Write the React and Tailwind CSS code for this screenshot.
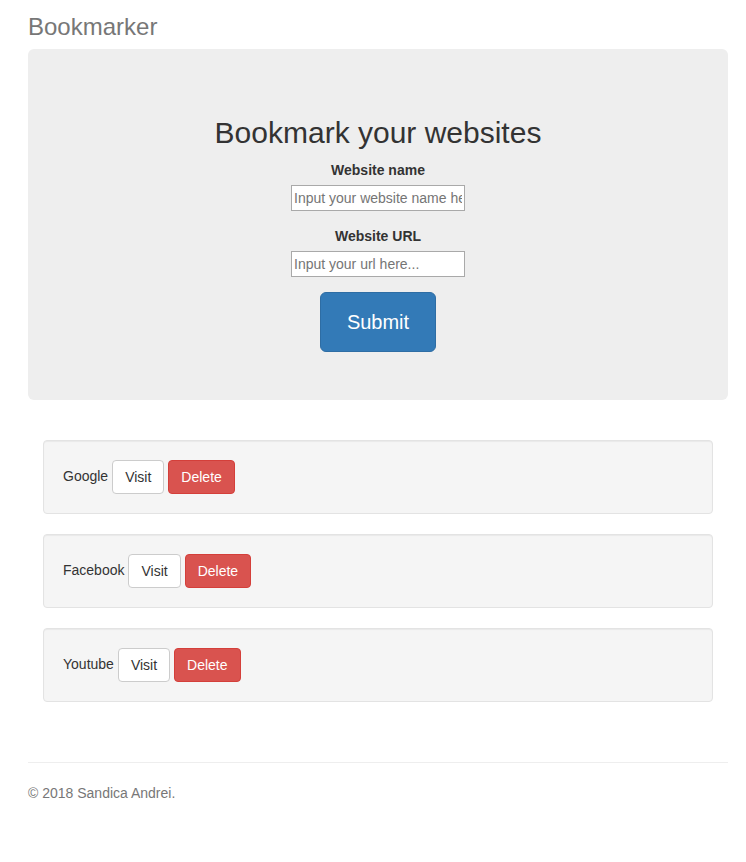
export default function App() {
  const items = ["Google", "Facebook", "Youtube"];
  return (
    <div className="min-h-[862px] bg-white text-[14px] text-[#333]" style={{ fontFamily: '"Liberation Sans", Arial, sans-serif' }}>
      <div className="pl-[28px] w-[728px]">
        <h3 className="pt-[13px] mb-[9px] text-[24px] leading-[27px] text-[#777]">Bookmarker</h3>
        <div className="bg-[#eeeeee] rounded-[6px] h-[351px] pt-[67px] flex flex-col items-center">
          <h2 className="text-[30px] leading-[33px] text-[#333] mb-[11px]">Bookmark your websites</h2>
          <label className="font-bold text-[14px] leading-[20px] mb-[5px]">Website name</label>
          <input
            type="text"
            placeholder="Input your website name here..."
            className="w-[174px] h-[26px] border border-[#a9a9a9] bg-white px-[2px] text-[14px] placeholder:text-[#757575] outline-none"
          />
          <label className="font-bold text-[14px] leading-[20px] mt-[15px] mb-[5px]">Website URL</label>
          <input
            type="text"
            placeholder="Input your url here..."
            className="w-[174px] h-[26px] border border-[#a9a9a9] bg-white px-[2px] text-[14px] placeholder:text-[#757575] outline-none"
          />
          <button className="mt-[15px] w-[116px] h-[60px] rounded-[6px] bg-[#337ab7] border border-[#2e6da4] text-white text-[20px]">
            Submit
          </button>
        </div>
        <div className="mt-[40px] px-[15px] flex flex-col gap-[20px]">
          {items.map((name) => (
            <div
              key={name}
              className="h-[74px] bg-[#f5f5f5] border border-[#e3e3e3] rounded-[4px] p-[19px] flex items-center shadow-[inset_0_1px_1px_rgba(0,0,0,0.05)]"
            >
              <span className="text-[14px] leading-[20px] mb-[2px] text-[#333]">{name}</span>
              <button className="ml-[4px] h-[34px] px-[12px] rounded-[4px] bg-white border border-[#cccccc] text-[#333] text-[14px]">
                Visit
              </button>
              <button className="ml-[4px] h-[34px] px-[12px] rounded-[4px] bg-[#d9534f] border border-[#d43f3a] text-white text-[14px]">
                Delete
              </button>
            </div>
          ))}
        </div>
        <div className="mt-[60px] border-t border-[#eeeeee]" />
        <p className="mt-[20px] text-[14px] leading-[20px] text-[#777]">© 2018 Sandica Andrei.</p>
      </div>
    </div>
  );
}
